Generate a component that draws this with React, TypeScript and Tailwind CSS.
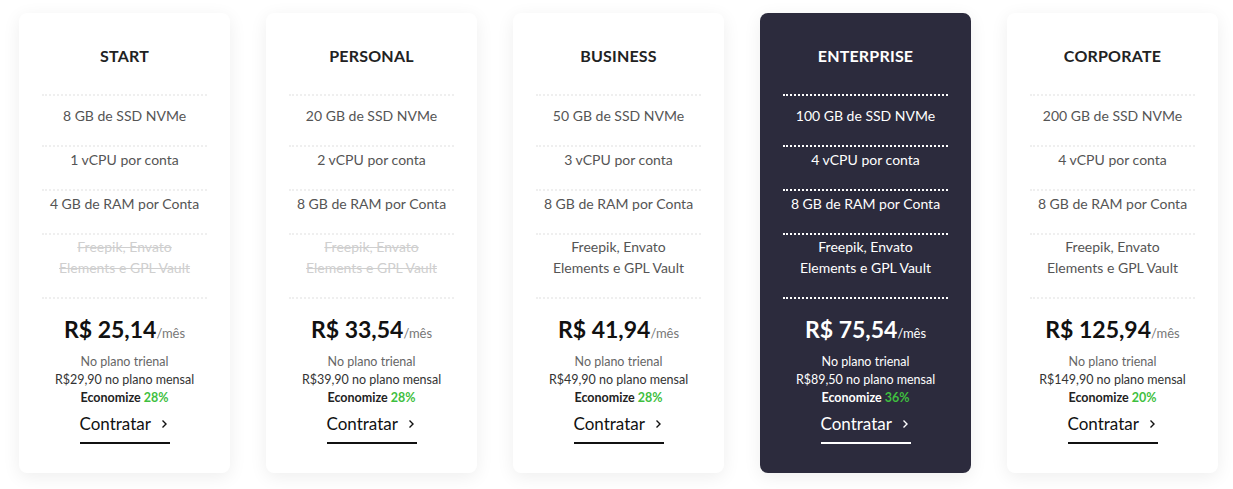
import React from 'react';

interface Plan {
  name: string;
  ssd: string;
  cpu: string;
  ram: string;
  extras: boolean;
  price: string;
  monthly: string;
  save: string;
  featured?: boolean;
}

const plans: Plan[] = [
  { name: 'START', ssd: '8 GB de SSD NVMe', cpu: '1 vCPU por conta', ram: '4 GB de RAM por Conta', extras: false, price: '25,14', monthly: 'R$29,90', save: '28%' },
  { name: 'PERSONAL', ssd: '20 GB de SSD NVMe', cpu: '2 vCPU por conta', ram: '8 GB de RAM por Conta', extras: false, price: '33,54', monthly: 'R$39,90', save: '28%' },
  { name: 'BUSINESS', ssd: '50 GB de SSD NVMe', cpu: '3 vCPU por conta', ram: '8 GB de RAM por Conta', extras: true, price: '41,94', monthly: 'R$49,90', save: '28%' },
  { name: 'ENTERPRISE', ssd: '100 GB de SSD NVMe', cpu: '4 vCPU por conta', ram: '8 GB de RAM por Conta', extras: true, price: '75,54', monthly: 'R$89,50', save: '36%', featured: true },
  { name: 'CORPORATE', ssd: '200 GB de SSD NVMe', cpu: '4 vCPU por conta', ram: '8 GB de RAM por Conta', extras: true, price: '125,94', monthly: 'R$149,90', save: '20%' },
];

const PlanCard: React.FC<{ plan: Plan }> = ({ plan }) => {
  const dark = plan.featured;
  const line = dark ? 'border-white' : 'border-[#efefef]';
  const feat = dark ? 'text-white' : 'text-[#555]';

  return (
    <div
      className={`w-[211px] h-[460px] flex-shrink-0 rounded-lg flex flex-col items-center shadow-[0_4px_18px_rgba(0,0,0,0.07)] ${
        dark ? 'bg-[#2c2b3d] text-white' : 'bg-white text-[#222]'
      }`}
    >
      <h3 className="mt-[33px] text-[16px] leading-[20px] font-bold tracking-[0.2px]">{plan.name}</h3>

      <ul className={`mt-[28px] w-[165px] border-t-2 border-dotted ${line} pt-[7px] text-center text-[14px] leading-[21px] ${feat}`}>
        {[plan.ssd, plan.cpu, plan.ram].map((f) => (
          <li key={f} className={`pt-[2px] pb-[19px] border-b-2 border-dotted ${line}`}>
            {f}
          </li>
        ))}
        <li
          className={`pt-[1px] pb-[19px] border-b-2 border-dotted ${line} ${
            plan.extras ? '' : 'line-through text-[#cfcfcf]'
          }`}
        >
          Freepik, Envato
          <br />
          Elements e GPL Vault
        </li>
      </ul>

      <div className="mt-[16px] flex items-baseline">
        <span className={`text-[23px] leading-[28px] font-bold ${dark ? 'text-white' : 'text-[#111]'}`}>R$ {plan.price}</span>
        <span className={`text-[13px] ${dark ? 'text-white' : 'text-[#777]'}`}>/mês</span>
      </div>

      <div className="mt-[9px] text-center text-[12.5px] leading-[18px]">
        <p className={dark ? 'text-white' : 'text-[#666]'}>No plano trienal</p>
        <p className={dark ? 'text-white' : 'text-[#333]'}>{plan.monthly} no plano mensal</p>
        <p className={`font-bold text-[12.5px] ${dark ? 'text-white' : 'text-[#222]'}`}>
          Economize <span className="text-[#3fbf3f]">{plan.save}</span>
        </p>
      </div>

      <a
        className={`mt-[6px] w-[90px] flex items-center gap-[10px] pb-[7px] border-b-2 text-[17px] leading-[22px] ${
          dark ? 'border-white text-white' : 'border-[#111] text-[#111]'
        }`}
      >
        Contratar
        <svg width="7" height="10" viewBox="0 0 7 10" fill="none" className="mt-[1px]">
          <path d="M1.5 1.5L5 5L1.5 8.5" stroke="currentColor" strokeWidth="1.4" />
        </svg>
      </a>
    </div>
  );
};

export default function App() {
  return (
    <div
      className="w-[1233px] h-[489px] bg-white pl-[19px] pt-[13px] flex gap-[36px]"
      style={{ fontFamily: 'Lato, "Open Sans", sans-serif' }}
    >
      {plans.map((p) => (
        <PlanCard key={p.name} plan={p} />
      ))}
    </div>
  );
}
